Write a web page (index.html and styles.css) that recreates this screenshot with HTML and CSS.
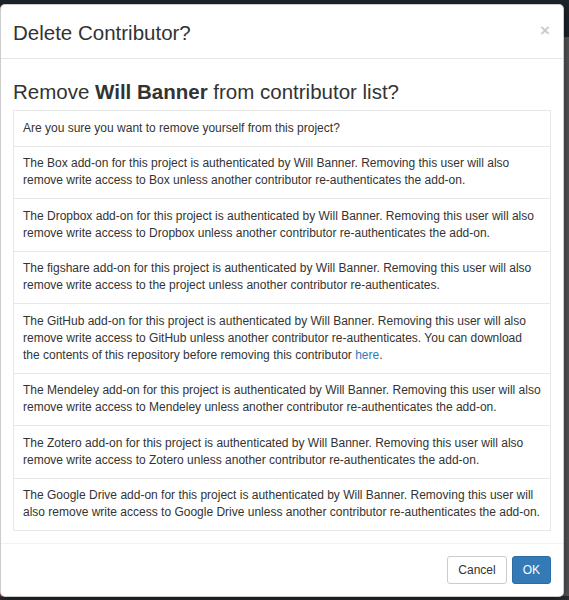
FILE: index.html
```html
<!DOCTYPE html>
<html lang="en">
<head>
<meta charset="utf-8">
<title>Delete Contributor?</title>
<link rel="stylesheet" href="styles.css">
</head>
<body>
<div class="page">
  <div class="page-nav"></div>
  <div class="page-main"></div>
  <div class="page-foot"><span class="page-foot-line"></span></div>
</div>
<div class="modal">
  <div class="modal-header">
    <h3 class="modal-title">Delete Contributor?</h3>
    <button class="close" type="button" aria-label="Close">&times;</button>
  </div>
  <div class="modal-body">
    <h3 class="remove-title">Remove <strong>Will Banner</strong> from contributor list?</h3>
    <ul class="list-group">
      <li class="list-group-item">Are you sure you want to remove yourself from this project?</li>
      <li class="list-group-item">The Box add-on for this project is authenticated by Will Banner. Removing this user will also remove write access to Box unless another contributor re-authenticates the add-on.</li>
      <li class="list-group-item">The Dropbox add-on for this project is authenticated by Will Banner. Removing this user will also remove write access to Dropbox unless another contributor re-authenticates the add-on.</li>
      <li class="list-group-item">The figshare add-on for this project is authenticated by Will Banner. Removing this user will also remove write access to the project unless another contributor re-authenticates.</li>
      <li class="list-group-item">The GitHub add-on for this project is authenticated by Will Banner. Removing this user will also remove write access to GitHub unless another contributor re-authenticates. You can download the contents of this repository before removing this contributor <a href="#">here</a>.</li>
      <li class="list-group-item">The Mendeley add-on for this project is authenticated by Will Banner. Removing this user will also remove write access to Mendeley unless another contributor re-authenticates the add-on.</li>
      <li class="list-group-item">The Zotero add-on for this project is authenticated by Will Banner. Removing this user will also remove write access to Zotero unless another contributor re-authenticates the add-on.</li>
      <li class="list-group-item">The Google Drive add-on for this project is authenticated by Will Banner. Removing this user will also remove write access to Google Drive unless another contributor re-authenticates the add-on.</li>
    </ul>
  </div>
  <div class="modal-footer">
    <button class="btn btn-default" type="button">Cancel</button>
    <button class="btn btn-primary" type="button">OK</button>
  </div>
</div>
</body>
</html>
```

FILE: styles.css
```css
* {
  box-sizing: border-box;
}

html, body {
  margin: 0;
  padding: 0;
  height: 100%;
}

body {
  font-family: "Liberation Sans", Arial, Helvetica, sans-serif;
  color: #333;
  background: #4e4f50;
  overflow: hidden;
}

.page {
  display: flex;
  flex-direction: column;
  height: 600px;
}

.page-nav {
  height: 37px;
  background: #1c252b;
}

.page-main {
  flex: 1;
  background: #555658;
}

.page-foot {
  height: 4px;
  background: #2a2f33;
  display: flex;
  align-items: flex-start;
}

.page-foot-line {
  width: 260px;
  height: 1px;
  background: #7a2a2a;
}

.modal {
  position: absolute;
  top: 4px;
  left: 0;
  width: 564px;
  background: #fff;
  border: 1px solid rgba(0, 0, 0, 0.2);
  border-radius: 5px;
  box-shadow: 0 4px 12px rgba(0, 0, 0, 0.5);
}

.modal-header {
  display: flex;
  justify-content: space-between;
  align-items: flex-start;
  padding: 14px 12px 11px 12px;
  border-bottom: 1px solid #e5e5e5;
}

.modal-title {
  margin: 0;
  font-size: 20.5px;
  font-weight: normal;
  line-height: 28px;
  color: #333;
}

.close {
  margin: 3px 1px 0 0;
  padding: 0;
  border: 0;
  background: transparent;
  font-family: "Liberation Sans", Arial, sans-serif;
  font-size: 17px;
  font-weight: bold;
  line-height: 1;
  color: #000;
  opacity: 0.2;
  cursor: pointer;
}

.modal-body {
  padding: 12px 12px 12px 12px;
}

.remove-title {
  margin: 9px 0 7px 0;
  font-size: 20.5px;
  font-weight: normal;
  line-height: 23px;
  color: #333;
}

.remove-title strong {
  font-weight: bold;
}

.list-group {
  list-style: none;
  margin: 0;
  padding: 0;
}

.list-group-item {
  padding: 8.5px 9px 9px 9px;
  font-size: 12px;
  line-height: 17px;
  border: 1px solid #e8e8e8;
  border-bottom: 0;
  background: #fff;
}

.list-group-item:last-child {
  border-bottom: 1px solid #e8e8e8;
}

.list-group-item a {
  color: #337ab7;
  text-decoration: none;
}

.modal-footer {
  display: flex;
  justify-content: flex-end;
  gap: 5px;
  padding: 12px 12px 12px 12px;
  border-top: 1px solid #f2f2f2;
}

.btn {
  height: 28px;
  font-family: "Liberation Sans", Arial, sans-serif;
  font-size: 12px;
  line-height: 16px;
  padding: 5px 10px;
  border: 1px solid transparent;
  border-radius: 3px;
  cursor: pointer;
}

.btn-default {
  color: #333;
  background: #fff;
  border-color: #ccc;
}

.btn-primary {
  color: #fff;
  background: #337ab7;
  border-color: #2e6da4;
}
```
